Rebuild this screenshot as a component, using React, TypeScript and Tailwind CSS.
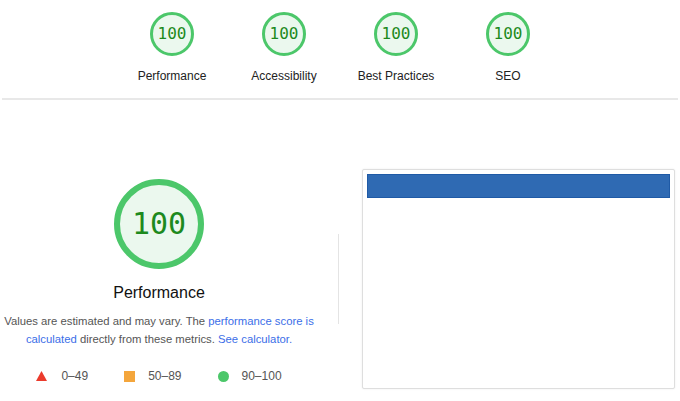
import React from "react";

const categories = ["Performance", "Accessibility", "Best Practices", "SEO"];

function SmallGauge({ label }: { label: string }) {
  return (
    <div className="flex w-[112px] flex-col items-center">
      <div className="flex h-[44px] w-[44px] items-center justify-center rounded-full border-[3px] border-[#4cc76a] bg-[#ebf8ee]">
        <span className="font-['DejaVu_Sans_Mono',monospace] text-[16px] leading-none text-[#1d8a1d]">
          100
        </span>
      </div>
      <div className="mt-[12px] text-[12px] leading-4 text-[#222]">{label}</div>
    </div>
  );
}

export default function App() {
  return (
    <div className="h-[401px] w-[680px] overflow-hidden bg-white font-['Liberation_Sans',Arial,sans-serif]">
      {/* category gauges */}
      <div className="flex justify-center pt-[12px]">
        {categories.map((c) => (
          <SmallGauge key={c} label={c} />
        ))}
      </div>
      <div className="mx-[2px] mt-[14px] h-[2px] bg-[#e8e8e8]" />

      <div className="flex">
        {/* left: performance summary */}
        <div className="flex w-[318px] flex-col items-center pt-[79px]">
          <div className="flex h-[90px] w-[90px] items-center justify-center rounded-full border-[6px] border-[#4cc76a] bg-[#ebf8ee]">
            <span className="font-['DejaVu_Sans_Mono',monospace] text-[30px] leading-none text-[#1d8a1d]">
              100
            </span>
          </div>
          <div className="mt-[14px] text-[16px] leading-5 text-[#111]">Performance</div>
          <p className="mt-[9px] whitespace-nowrap text-center text-[11.3px] leading-[18px] text-[#555]">
            Values are estimated and may vary. The{" "}
            <span className="text-[#3b6ee8]">performance score is</span>
            <br />
            <span className="text-[#3b6ee8]">calculated</span> directly from these metrics.{" "}
            <span className="text-[#3b6ee8]">See calculator.</span>
          </p>
          <div className="mt-[20px] flex items-center text-[12px] leading-4 text-[#555]">
            <div className="flex items-center">
              <svg width="11" height="10" viewBox="0 0 11 10">
                <polygon points="5.5,0 11,10 0,10" fill="#eb3b2c" />
              </svg>
              <span className="ml-[14px]">0–49</span>
            </div>
            <div className="ml-[36px] flex items-center">
              <div className="h-[11px] w-[11px] bg-[#f4a63c]" />
              <span className="ml-[13px]">50–89</span>
            </div>
            <div className="ml-[36px] flex items-center">
              <div className="h-[11px] w-[11px] rounded-full bg-[#4cc76a]" />
              <span className="ml-[13px]">90–100</span>
            </div>
          </div>
        </div>

        {/* separator */}
        <div className="ml-[20px] mt-[134px] h-[90px] w-px bg-[#e4e4e4]" />

        {/* right: screenshot frame */}
        <div className="ml-[23px] mt-[69px] h-[220px] w-[313px] rounded-[2px] border border-[#dedede] bg-white p-[4px] shadow-[0_0_2px_rgba(0,0,0,0.08)]">
          <div className="h-[24px] border border-[#1f5aa6] bg-[#2f6ab3]" />
        </div>
      </div>
    </div>
  );
}
